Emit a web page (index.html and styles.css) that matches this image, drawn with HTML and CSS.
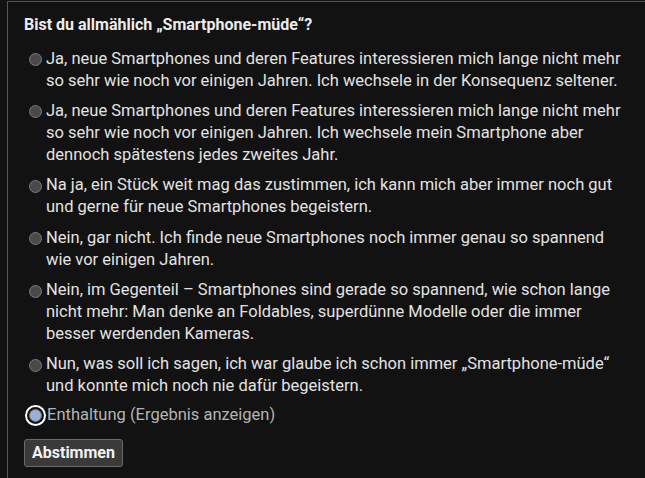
FILE: index.html
```html
<!DOCTYPE html>
<html lang="de">
<head>
    <meta charset="UTF-8">
    <meta name="viewport" content="width=device-width, initial-scale=1.0">
    <link rel="stylesheet" href="styles.css">
    <title>Umfrage</title>
</head>
<body>
    <div class="poll">
        <h3 class="poll-title">Bist du allmählich „Smartphone-müde“?</h3>
        <form class="poll-form">
            <label class="option">
                <input type="radio" name="vote" value="1">
                <span>Ja, neue Smartphones und deren Features interessieren mich lange nicht mehr so sehr wie noch vor einigen Jahren. Ich wechsele in der Konsequenz seltener.</span>
            </label>
            <label class="option">
                <input type="radio" name="vote" value="2">
                <span>Ja, neue Smartphones und deren Features interessieren mich lange nicht mehr so sehr wie noch vor einigen Jahren. Ich wechsele mein Smartphone aber dennoch spätestens jedes zweites Jahr.</span>
            </label>
            <label class="option">
                <input type="radio" name="vote" value="3">
                <span>Na ja, ein Stück weit mag das zustimmen, ich kann mich aber immer noch gut und gerne für neue Smartphones begeistern.</span>
            </label>
            <label class="option">
                <input type="radio" name="vote" value="4">
                <span>Nein, gar nicht. Ich finde neue Smartphones noch immer genau so spannend wie vor einigen Jahren.</span>
            </label>
            <label class="option">
                <input type="radio" name="vote" value="5">
                <span>Nein, im Gegenteil – Smartphones sind gerade so spannend, wie schon lange nicht mehr: Man denke an Foldables, superdünne Modelle oder die immer besser werdenden Kameras.</span>
            </label>
            <label class="option">
                <input type="radio" name="vote" value="6">
                <span>Nun, was soll ich sagen, ich war glaube ich schon immer „Smartphone-müde“ und konnte mich noch nie dafür begeistern.</span>
            </label>
            <label class="option option-abstain">
                <input type="radio" name="vote" value="0" checked>
                <span>Enthaltung (Ergebnis anzeigen)</span>
            </label>
            <button type="submit" class="vote-button">Abstimmen</button>
        </form>
    </div>
</body>
</html>
```

FILE: styles.css
```css
/* Reset */
* {
    margin: 0;
    padding: 0;
    box-sizing: border-box;
}

body {
    background: #121212;
    color: #e2e2e2;
    font-family: Roboto, 'Liberation Sans', sans-serif;
    font-size: 16.5px;
    line-height: 22px;
    overflow: hidden;
    padding: 1px 0 0 7px;
}

/* Poll box */
.poll {
    width: 660px;
    min-height: 500px;
    border: 1px solid #555;
    background: #121212;
    padding: 11px 16px 16px 16px;
}

.poll-title {
    font-size: 16px;
    font-weight: bold;
    line-height: 24px;
    color: #ececec;
    margin-bottom: 10.5px;
}

.poll-form {
    display: flex;
    flex-direction: column;
    align-items: flex-start;
    width: 602px;
}

/* Options */
.option {
    display: flex;
    align-items: flex-start;
    gap: 4px;
    margin-bottom: 8.4px;
    padding-left: 5px;
    cursor: pointer;
}

.option input {
    appearance: none;
    -webkit-appearance: none;
    flex: none;
    width: 13px;
    height: 13px;
    margin-top: 5.5px;
    border-radius: 50%;
    border: 1px solid #7a7a7a;
    background: #4a4a4a;
}

.option input:checked {
    background: #98b0d8;
    border-color: #6f7580;
    box-shadow: 0 0 0 2px #121212, 0 0 0 4px #fff;
}

.option-abstain {
    color: #b4b4b4;
    margin-top: -2px;
    margin-bottom: 13px;
    gap: 5px;
}

/* Button */
.vote-button {
    font-family: inherit;
    font-size: 16px;
    font-weight: bold;
    color: #f2f2f2;
    background: #3a3a3a;
    border: 1px solid #6a6a6a;
    border-radius: 3px;
    padding: 3px 7px;
    line-height: 20px;
    cursor: pointer;
}
```
